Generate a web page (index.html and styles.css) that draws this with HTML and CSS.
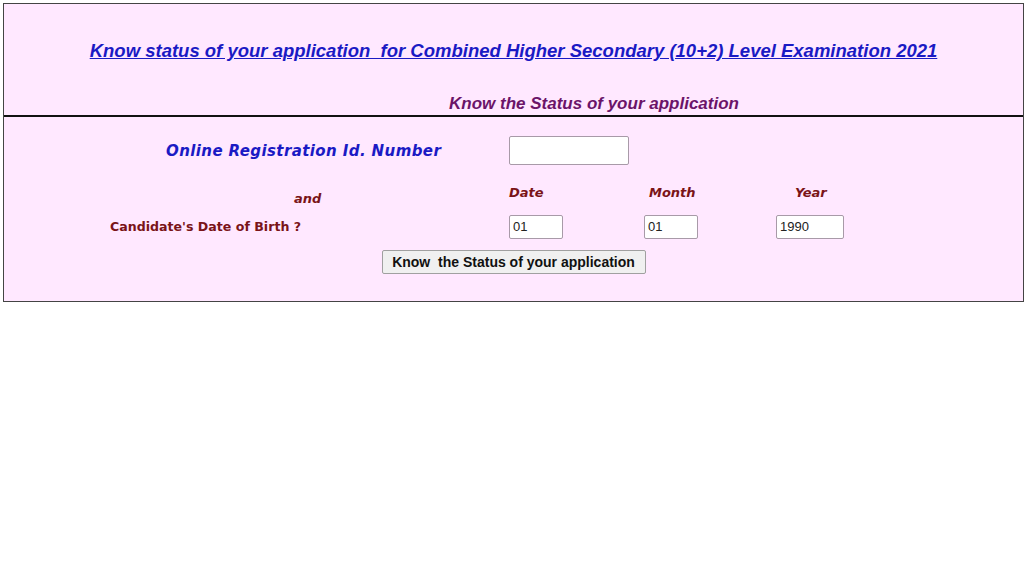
FILE: index.html
```html
<!DOCTYPE html>
<html>
<head>
<meta charset="utf-8">
<link rel="stylesheet" href="styles.css">
</head>
<body>
<div class="frame">
  <div class="head">
    <div class="title"><a href="#">Know status of your application&nbsp; for Combined Higher Secondary (10+2) Level Examination 2021</a></div>
    <div class="subtitle">Know the Status of your application</div>
  </div>
  <form class="form">
    <div class="row row-id">
      <div class="lbl-id">Online Registration Id. Number</div>
      <input class="in-id" type="text">
    </div>
    <div class="grid">
      <div class="lbl-and">and</div>
      <div class="h-date">Date</div>
      <div class="h-month">Month</div>
      <div class="h-year">Year</div>
      <div class="lbl-dob">Candidate's Date of Birth ?</div>
      <div><input class="in-d" type="text" value="01"></div>
      <div><input class="in-m" type="text" value="01"></div>
      <div><input class="in-y" type="text" value="1990"></div>
    </div>
    <div class="btn-row"><button type="button" class="btn">Know&nbsp; the Status of your application</button></div>
  </form>
</div>
</body>
</html>
```
FILE: styles.css
```css
html, body { margin: 0; padding: 0; background: #fff; }
body { padding: 3px 0 0 3px; font-family: "Liberation Sans", Arial, sans-serif; }
.frame {
  width: 1019px;
  height: 297px;
  border: 1px solid #444;
  background: #ffe8ff;
}
.head {
  height: 111px;
  border-bottom: 2px solid #111;
}
.title {
  padding-top: 36px;
  text-align: center;
  font-size: 18.5px;
  font-weight: bold;
  font-style: italic;
  line-height: 22px;
}
.title a { color: #1a1ac4; text-decoration: underline; }
.subtitle {
  margin-top: 32px;
  padding-left: 445px;
  font-size: 17px;
  font-weight: bold;
  font-style: italic;
  color: #6b1469;
  line-height: 20px;
}
.form { margin: 0; padding-top: 19px; font-family: "DejaVu Sans", Verdana, sans-serif; }
.row-id { display: flex; align-items: center; height: 29px; }
.lbl-id {
  width: 343px;
  padding-left: 162px;
  font-size: 15px;
  font-weight: bold;
  font-style: italic;
  color: #1a1ac4;
  letter-spacing: 0.4px;
}
input {
  box-sizing: border-box;
  border: 1px solid #a89aa8;
  border-radius: 2px;
  background: #fff;
  font-family: "Liberation Sans", Arial, sans-serif;
  font-size: 13px;
  color: #222;
  padding: 0 3px;
  margin: 0;
}
.in-id { width: 120px; height: 29px; }
.grid {
  display: grid;
  grid-template-columns: 505px 135px 132px 1fr;
  grid-template-rows: 31px 25px;
  margin-top: 18px;
  font-size: 13px;
  font-weight: bold;
  color: #7a1418;
}
.grid > div { display: flex; align-items: center; }
.lbl-and { padding-left: 290px; font-style: italic; padding-top: 0; }
.h-date, .h-month, .h-year { font-style: italic; align-items: flex-start !important; padding-top: 2px; }
.h-month { padding-left: 5px; }
.h-year { padding-left: 19px; }
.lbl-dob { padding-left: 106px; font-size: 12.6px; }
.in-d, .in-m { width: 54px; height: 24px; }
.in-y { width: 68px; height: 24px; }
.btn-row { display: flex; justify-content: center; margin-top: 11px; }
.btn {
  width: 264px;
  height: 24px;
  border: 1px solid #a0a0a0;
  border-radius: 2px;
  background: #f0f0f0;
  font-family: "Liberation Sans", Arial, sans-serif;
  font-size: 14px;
  font-weight: bold;
  color: #111;
  padding: 0;
}
```
